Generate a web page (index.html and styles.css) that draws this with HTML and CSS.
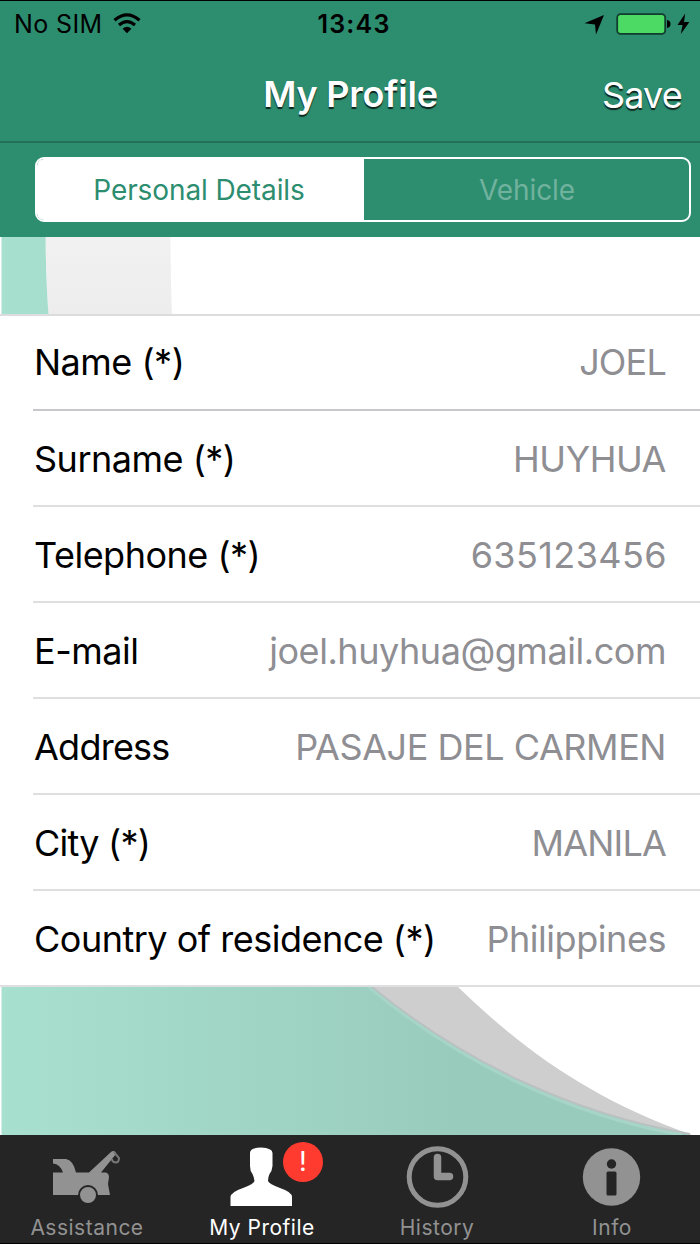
FILE: index.html
```html
<!DOCTYPE html>
<html lang="en">
<head>
    <meta charset="UTF-8">
    <meta name="viewport" content="width=device-width, initial-scale=1.0">
    <title>My Profile</title>
    <link rel="stylesheet" href="styles.css">
</head>
<body>

    <header class="header">
        <div class="status-bar">
            <div class="status-left">
                <span class="carrier">No SIM</span>
                <svg class="wifi" width="28" height="22" viewBox="0 0 28 22">
                    <path d="M1.5 7.2 Q14 -3.4 26.5 7.2" fill="none" stroke="#000" stroke-width="3.2"/>
                    <path d="M6 12 Q14 5.2 22 12" fill="none" stroke="#000" stroke-width="3.2"/>
                    <path d="M9.6 15.8 Q14 11.8 18.4 15.8 L14 20.2 Z"/>
                </svg>
            </div>
            <span class="time">13:43</span>
            <div class="status-right">
                <svg width="21" height="21" viewBox="0 0 21 21"><path d="M20 1 L12 20.5 L11 10.5 L0.5 9.3 Z"/></svg>
                <svg class="battery" width="56" height="22" viewBox="0 0 56 22">
                    <rect x="1.2" y="1.2" width="48" height="19.6" rx="3.4" fill="#4cd964" stroke="#103d2e" stroke-width="1.8"/>
                    <path d="M51 7 Q54.5 7.4 54.5 11 T51 15 Z"/>
                </svg>
                <svg width="13" height="22" viewBox="0 0 13 22"><path d="M8.2 0.5 L0.5 12 H5.6 L3.8 21 L12.4 9 H7 Z"/></svg>
            </div>
        </div>
        <nav class="nav-bar">
            <h1 class="nav-title">My Profile</h1>
            <a class="nav-save">Save</a>
        </nav>
        <div class="segment-bar">
            <div class="segments">
                <div class="segment active">Personal Details</div>
                <div class="segment">Vehicle</div>
            </div>
        </div>
    </header>

    <main class="content">
        <svg class="swoosh" width="700" height="78" viewBox="0 0 700 78">
            <defs>
                <linearGradient id="mint" gradientUnits="userSpaceOnUse" x1="0" y1="0" x2="460" y2="0">
                    <stop offset="0" stop-color="#a8e0cf"/>
                    <stop offset="1" stop-color="#99cbbd"/>
                </linearGradient>
                <linearGradient id="pale" x1="0" y1="0" x2="0" y2="1">
                    <stop offset="0" stop-color="#f1f1f1"/>
                    <stop offset="1" stop-color="#ededee"/>
                </linearGradient>
            </defs>
            <path d="M45 0 H170.5 Q170.5 40 172 78 H48 Z" fill="url(#pale)"/>
            <path d="M1.5 0 H45.5 Q46 45 48.5 78 H1.5 Z" fill="url(#mint)"/>
        </svg>

        <div class="profile-list">
            <div class="row first"><span class="label">Name (*)</span><span class="value caps">JOEL</span></div>
            <div class="row"><span class="label">Surname (*)</span><span class="value">HUYHUA</span></div>
            <div class="row"><span class="label">Telephone (*)</span><span class="value phone">635123456</span></div>
            <div class="row"><span class="label">E-mail</span><span class="value">joel.huyhua@gmail.com</span></div>
            <div class="row"><span class="label tight">Address</span><span class="value">PASAJE DEL CARMEN</span></div>
            <div class="row"><span class="label tight">City (*)</span><span class="value caps">MANILA</span></div>
            <div class="row last"><span class="label">Country of residence (*)</span><span class="value">Philippines</span></div>
        </div>

        <svg class="swoosh" width="700" height="148" viewBox="0 0 700 148">
            <path d="M365 0 H458 C522 62 590 112 692 148 H365 Z" fill="#cececf"/>
            <path d="M1.5 0 H371 C461 74 571 127 691 148 H1.5 Z" fill="url(#mint)"/>
            <path d="M372 0 C462 74 572 127 690 147" fill="none" stroke="#bbc0c1" stroke-width="2"/>
            <path d="M368.500 0 C458.500 75 568.500 128 682 148" fill="none" stroke="#a6d5c8" stroke-width="3"/>
        </svg>
    </main>

    <footer class="tab-bar">
        <div class="tab">
            <svg class="tab-icon" width="70" height="68" viewBox="0 0 70 68">
                <path d="M2 24 H15 Q22 25 25 37.500 H38 L60 17 Q62 15 64.500 17 L65 19 L50 37.500 H55 Q58 38.500 58 42 L57 49 L59 60 H2 V37.500 H12 Q9 29 2 28.500 Z" fill="#929292"/>
                <path d="M63 17 L68 23 Q68 27.500 64.500 27.500 Q61 27 61 24" fill="none" stroke="#777" stroke-width="2"/>
                <circle cx="37" cy="60" r="9" fill="#929292" stroke="#252525" stroke-width="2"/>
            </svg>
            <span class="tab-label">Assistance</span>
        </div>
        <div class="tab active">
            <svg class="tab-icon" width="70" height="68" viewBox="0 0 70 68">
                <path d="M4.500 71 V62 Q5 57 17 53 Q28 49 28.500 46 Q28 42 26.500 39 Q24 36 24 31 V18 Q24 13 35 12.500 Q46.500 13 46.500 18 V31 Q46 36 43.500 39 Q42 42 42 46 Q43 49 54 53 Q66 57 66 62 V71 Z" fill="#fff"/>
            </svg>
            <span class="badge">!</span>
            <span class="tab-label">My Profile</span>
        </div>
        <div class="tab">
            <svg class="tab-icon" width="70" height="68" viewBox="0 0 70 68">
                <circle cx="36.500" cy="42" r="28.300" fill="none" stroke="#929292" stroke-width="5"/>
                <path d="M36.500 22.500 V41.500 H48.500" fill="none" stroke="#929292" stroke-width="7.500" stroke-linecap="round" stroke-linejoin="round"/>
            </svg>
            <span class="tab-label">History</span>
        </div>
        <div class="tab">
            <svg class="tab-icon" width="70" height="68" viewBox="0 0 70 68">
                <circle cx="35.500" cy="42" r="28.700" fill="#929292"/>
                <circle cx="35.500" cy="29" r="4.700" fill="#252525"/>
                <rect x="30.500" y="36.500" width="10" height="24" rx="1.500" fill="#252525"/>
            </svg>
            <span class="tab-label">Info</span>
        </div>
    </footer>

</body>
</html>
```
FILE: styles.css
```css
* { box-sizing: border-box; }
body { margin: 0; width: 700px; height: 1244px; overflow: hidden; font-family: Inter, "Liberation Sans", sans-serif; background-color: #fff; color: #000; }
svg { display: block; overflow: visible; flex-shrink: 0; }

.header { height: 237px; background-color: #2d8d6f; border-top: 1px solid #000; }
.status-bar { display: grid; grid-template-columns: 1fr auto 1fr; align-items: center; height: 46px; padding: 0 10px 0 14px; }
.status-left { display: flex; align-items: center; gap: 10px; }
.carrier { font-size: 25px; letter-spacing: 0.4px; }
.time { padding-left: 4px; font-size: 25px; font-weight: 600; letter-spacing: 1.2px; }
.status-right { display: flex; align-items: center; justify-content: flex-end; gap: 11px; }
.battery { margin-right: -6px; }

.nav-bar { display: grid; grid-template-columns: 1fr auto 1fr; align-items: center; height: 96px; padding: 0 18px 0 19px; border-bottom: 2px solid #24705a; color: #fff; text-shadow: 0 2px 1px rgba(0, 0, 0, 0.75); }
.nav-title { grid-column: 2; margin: 0; font-size: 36px; font-weight: 600; line-height: 94px; letter-spacing: -0.2px; }
.nav-save { justify-self: end; padding-top: 1px; font-size: 36px; letter-spacing: -0.8px; }

.segment-bar { padding: 14px 9px 0 35px; }
.segments { display: flex; height: 65px; border: 2px solid #fff; border-radius: 9px; overflow: hidden; }
.segment { flex: 1; padding: 1px 0 0 1px; font-size: 28px; line-height: 61px; text-align: center; color: #71b29e; letter-spacing: -0.1px; }
.segment.active { padding: 1px 3px 0 0; background-color: #fff; color: #2d8d6f; }

.content { height: 898px; }
.content .swoosh { overflow: hidden; }
.profile-list { margin-top: -1px; border-top: 2px solid #dcdcde; background-color: #fff; position: relative; }
.row { display: flex; justify-content: space-between; align-items: center; height: 96px; margin-left: 33px; padding: 1px 34px 0 1px; border-bottom: 2px solid #dfdfe1; font-size: 36px; white-space: nowrap; }
.row.first { height: 95px; padding-top: 0; padding-bottom: 2px; border-bottom-color: #c8c7cc; }
.row.last { margin-left: 0; padding-left: 34px; }
.label { letter-spacing: -0.5px; }
.label.tight { letter-spacing: -0.75px; }
.value { color: #8e8e93; letter-spacing: -0.45px; }
.value.caps { letter-spacing: -0.8px; }
.value.phone { margin-right: -1px; letter-spacing: 0.4px; }

.tab-bar { display: grid; grid-template-columns: repeat(4, 1fr); height: 109px; background-color: #252525; border-bottom: 1px solid #000; }
.tab { position: relative; display: flex; flex-direction: column; align-items: center; color: #929292; }
.tab.active { color: #fff; }
.tab-icon { margin-right: 3px; }
.tab-label { margin: 12px 1px 0 0; font-size: 21px; line-height: 26px; letter-spacing: 0.5px; }
.badge { position: absolute; top: 7px; left: 108px; width: 40px; height: 40px; border-radius: 50%; background-color: #ff3b30; color: #fff; font-size: 27px; line-height: 39px; text-align: center; }
```
